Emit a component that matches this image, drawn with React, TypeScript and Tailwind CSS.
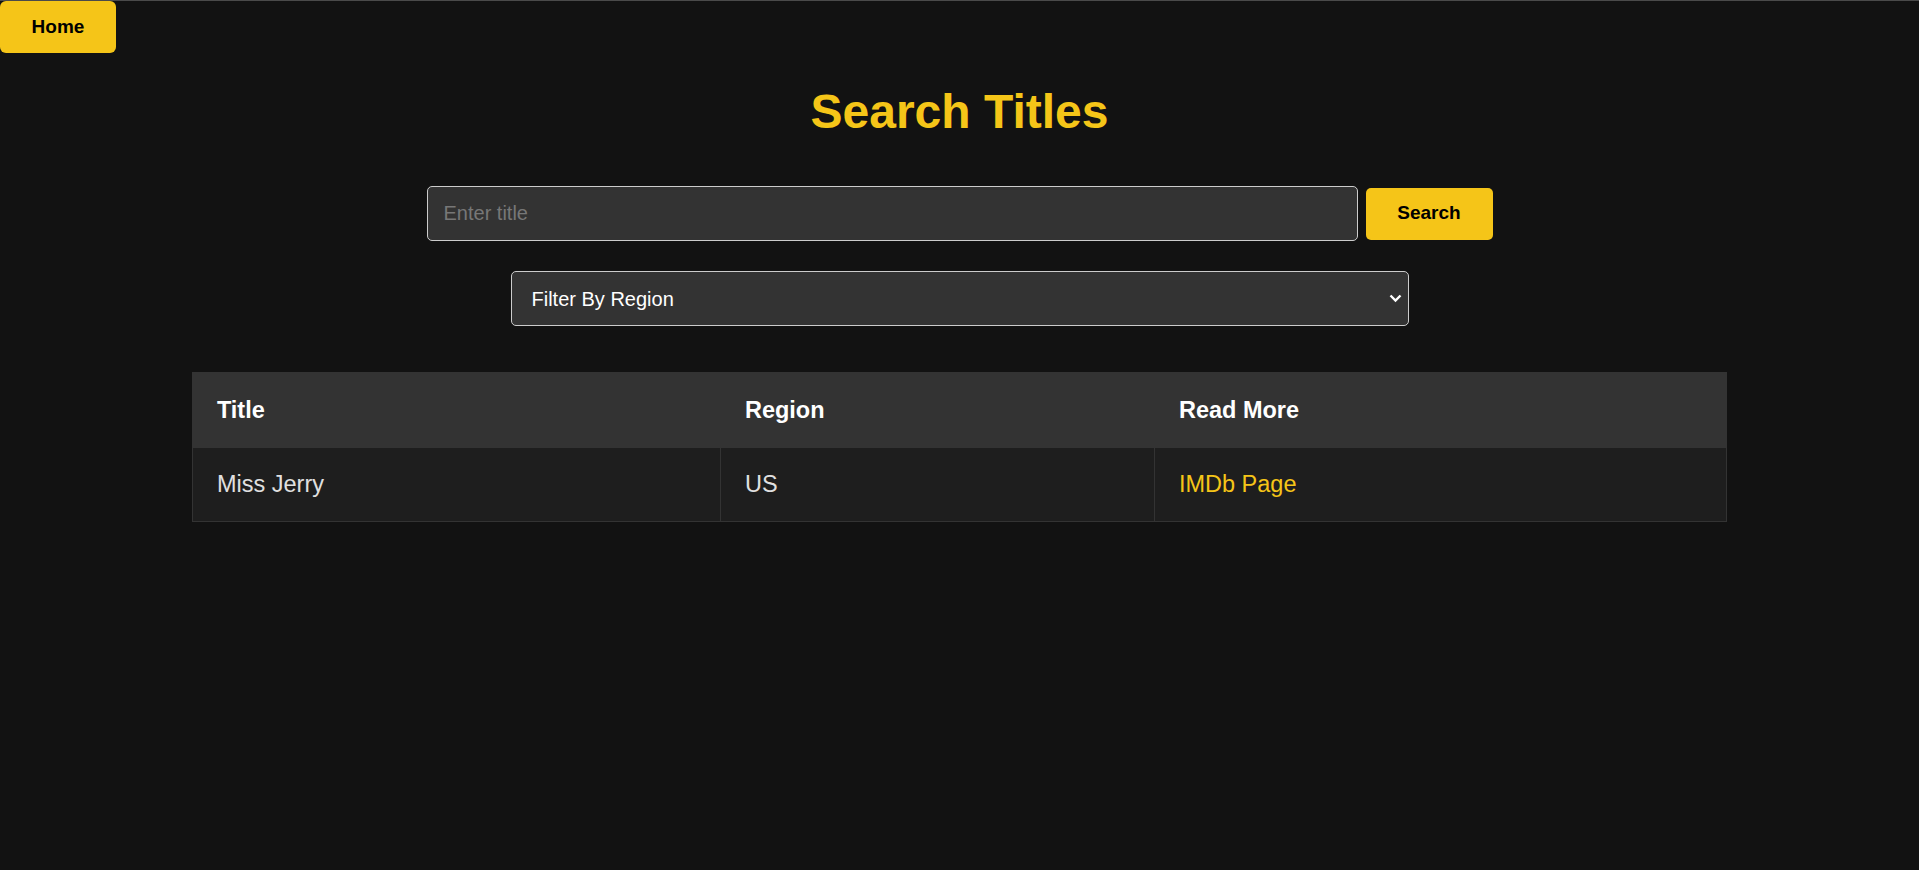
// App.tsx
const rows = [{ title: 'Miss Jerry', region: 'US', link: 'IMDb Page' }];

export default function App() {
  return (
    <div className="min-h-[870px] bg-[#121212] border-t border-[#4a4a4a] font-['Liberation_Sans',Arial,sans-serif]">
      <button className="block w-[116px] h-[52px] bg-[#f5c518] rounded-[6px] text-[19px] font-bold text-black">
        Home
      </button>

      <h1 className="mt-[35px] text-center text-[48px] leading-[48px] font-bold text-[#f5c518]">
        Search Titles
      </h1>

      <div className="mt-[50px] flex items-center justify-center gap-2">
        <input
          type="text"
          placeholder="Enter title"
          className="w-[931px] h-[55px] px-4 bg-[#333] border border-[#ccc] rounded-[5px] text-[20px] text-white placeholder:text-[#777] outline-none"
        />
        <button className="w-[127px] h-[52px] bg-[#f5c518] rounded-[5px] text-[19px] font-bold text-black">
          Search
        </button>
      </div>

      <div className="mt-[30px] flex justify-center">
        <div className="relative w-[898px]">
          <select className="w-full h-[55px] pl-5 pr-10 appearance-none bg-[#333] border border-[#ccc] rounded-[5px] text-[20px] text-white outline-none">
            <option>Filter By Region</option>
          </select>
          <svg
            className="absolute right-[7px] top-[23px] pointer-events-none"
            width="13"
            height="9"
            viewBox="0 0 13 9"
            fill="none"
          >
            <path d="M1.5 1.5 L6.5 6.5 L11.5 1.5" stroke="white" strokeWidth="2.4" />
          </svg>
        </div>
      </div>

      <table className="mt-[46px] mx-auto w-[80%] border-collapse text-[23.5px]">
        <thead>
          <tr className="bg-[#333]">
            <th className="w-[528px] pl-6 pr-6 py-[23px] leading-[28px] text-left font-bold text-white border border-[#333]">Title</th>
            <th className="w-[434px] px-6 py-[23px] leading-[28px] text-left font-bold text-white border border-[#333]">Region</th>
            <th className="px-6 py-[23px] leading-[28px] text-left font-bold text-white border border-[#333]">Read More</th>
          </tr>
        </thead>
        <tbody>
          {rows.map((r) => (
            <tr key={r.title} className="bg-[#1e1e1e]">
              <td className="px-6 py-[23px] leading-[27px] text-[#e0e0e0] border border-[#333]">{r.title}</td>
              <td className="px-6 py-[23px] leading-[27px] text-[#e0e0e0] border border-[#333]">{r.region}</td>
              <td className="px-6 py-[23px] leading-[27px] border border-[#333]">
                <a href="#" className="text-[#f5c518]">{r.link}</a>
              </td>
            </tr>
          ))}
        </tbody>
      </table>
    </div>
  );
}
